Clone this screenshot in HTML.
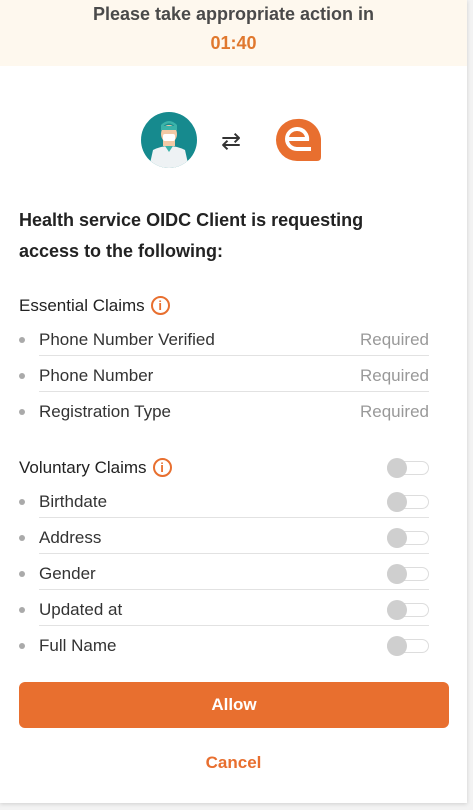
<!DOCTYPE html><html><head><style>
body{margin:0;width:473px;height:810px;background:#f3f3f3;font-family:"Liberation Sans",sans-serif;overflow:hidden;position:relative}
.card{position:absolute;left:0;top:0;width:467px;height:803px;background:#fff;box-shadow:0 1px 4px rgba(0,0,0,.15)}
.ban{position:absolute;left:0;top:0;width:467px;height:66px;background:#fef8ee;text-align:center;color:#4a4a4a;font-size:18px;font-weight:bold}
.ban .t{position:absolute;left:0;right:0;top:4px}
.ban .c{position:absolute;left:0;right:0;top:33px;color:#e0782e;font-weight:bold}
.a{position:absolute}
.h{left:19px;top:205px;font-size:18px;font-weight:bold;color:#222;line-height:31px;width:385px}
.i{display:inline-block;width:15px;height:15px;border:2px solid #e86f2f;border-radius:50%;color:#e86f2f;font-size:13px;text-align:center;line-height:15px;vertical-align:1px;margin-left:6px;font-weight:bold}
.row{left:19px;width:410px;height:36px;font-size:17px;color:#333}
.row .d{position:absolute;left:0;top:16px;width:6px;height:6px;border-radius:50%;background:#aaa}
.row .l{position:absolute;left:20px;top:9px}
.row .r{position:absolute;right:0;top:9px;color:#999}
.sep{left:39px;width:390px;height:1px;background:#e2e2e2}
.tg{position:absolute;right:0;top:12px;width:40px;height:12px;border:1px solid #ddd;border-radius:7px}
.tg:before{content:"";position:absolute;left:-1px;top:-4px;width:20px;height:20px;border-radius:50%;background:#cfcfcf}
.btn{left:19px;top:682px;width:430px;height:46px;background:#e86f2f;border-radius:6px;color:#fff;font-weight:bold;font-size:17px;text-align:center;line-height:46px}
.cn{left:0;width:467px;top:753px;text-align:center;color:#e86f2f;font-size:17px;font-weight:bold}
</style></head><body><div class="card">
<div class="ban"><div class="t">Please take appropriate action in</div><div class="c">01:40</div></div>
<svg class="a" style="left:141px;top:112px" width="56" height="56" viewBox="0 0 56 56"><circle cx="28" cy="28" r="28" fill="#168a8e"/><clipPath id="cp"><circle cx="28" cy="28" r="28"/></clipPath><g clip-path="url(#cp)"><path d="M8 56 L12 38 Q28 30 44 38 L48 56Z" fill="#eef2f4"/><rect x="22" y="26" width="12" height="8" fill="#f2c9a5"/><path d="M24 34 L28 40 L32 34Z" fill="#3bb3a9"/><ellipse cx="28" cy="22" rx="8" ry="9" fill="#f2c9a5"/><path d="M20 17 Q28 6 36 17 L36 13 Q28 5 20 13Z" fill="#3bb3a9"/><rect x="20" y="14" width="16" height="4" fill="#3bb3a9"/><rect x="22" y="22" width="12" height="7" rx="2" fill="#fff"/></g></svg>
<div class="a" style="left:221px;top:127px;font-size:24px;color:#333">⇄</div>
<svg class="a" style="left:275px;top:117px" width="47" height="45" viewBox="0 0 47 45"><path d="M22 2 A21 21 0 1 0 22 44 L42 44 Q46 44 46 40 L46 22 A22 22 0 0 0 22 2Z" fill="#e86f2f"/><path d="M22 10 A12 12 0 1 0 22 34 L36 34 L36 30 L22 30 A8 8 0 0 1 14 24 L34 24 A12 12 0 0 0 22 10Z M22 14 A8 8 0 0 1 30 20 L14 20 A8 8 0 0 1 22 14Z" fill="#fff"/></svg>
<div class="a h">Health service OIDC Client is requesting access to the following:</div>
<div class="a row" style="top:287px"><span class="l" style="left:0;color:#222">Essential Claims<span class="i">i</span></span></div>
<div class="a row" style="top:321px"><span class="d"></span><span class="l">Phone Number Verified</span><span class="r">Required</span></div>
<div class="a sep" style="top:355px"></div>
<div class="a row" style="top:357px"><span class="d"></span><span class="l">Phone Number</span><span class="r">Required</span></div>
<div class="a sep" style="top:391px"></div>
<div class="a row" style="top:393px"><span class="d"></span><span class="l">Registration Type</span><span class="r">Required</span></div>
<div class="a row" style="top:449px"><span class="l" style="left:0;color:#222">Voluntary Claims<span class="i">i</span></span><span class="tg"></span></div>
<div class="a row" style="top:483px"><span class="d"></span><span class="l">Birthdate</span><span class="tg"></span></div>
<div class="a sep" style="top:517px"></div>
<div class="a row" style="top:519px"><span class="d"></span><span class="l">Address</span><span class="tg"></span></div>
<div class="a sep" style="top:553px"></div>
<div class="a row" style="top:555px"><span class="d"></span><span class="l">Gender</span><span class="tg"></span></div>
<div class="a sep" style="top:589px"></div>
<div class="a row" style="top:591px"><span class="d"></span><span class="l">Updated at</span><span class="tg"></span></div>
<div class="a sep" style="top:625px"></div>
<div class="a row" style="top:627px"><span class="d"></span><span class="l">Full Name</span><span class="tg"></span></div>
<div class="a btn">Allow</div>
<div class="a cn">Cancel</div>
</div></body></html>
